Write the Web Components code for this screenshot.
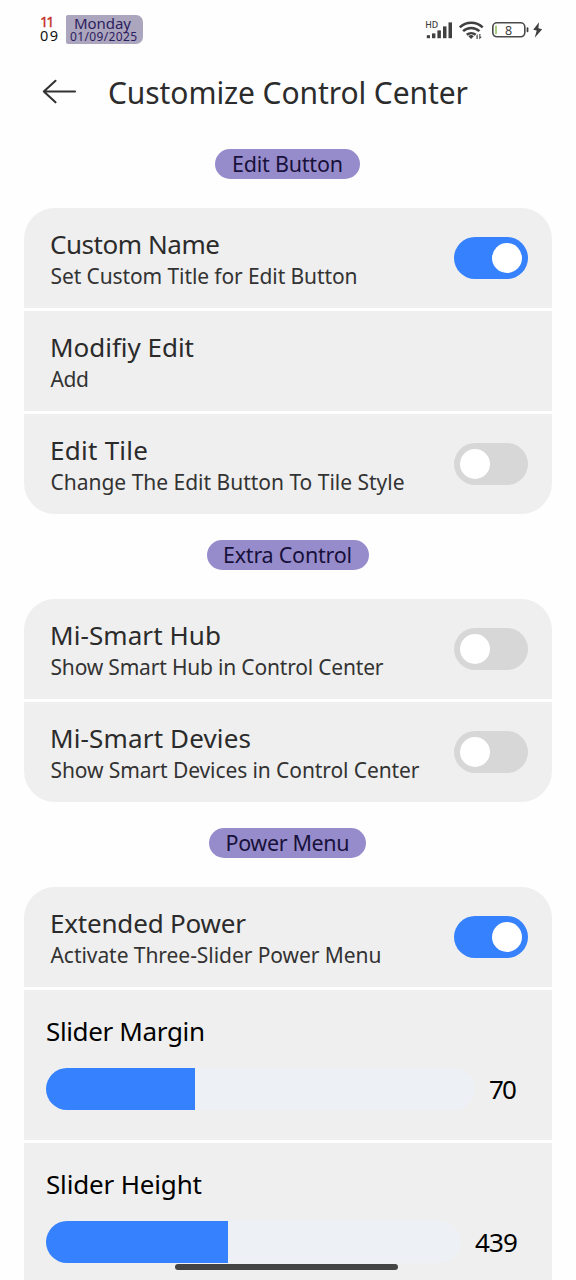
<!DOCTYPE html>
<html lang="en">
<head>
<meta charset="utf-8">
<title>Customize Control Center</title>
<style>
html, body { margin: 0; background: #fefefe; }
body { height: 1280px; overflow: hidden; font-family: "Noto Sans", "Open Sans", sans-serif; color: #2b2b2b; }
</style>
</head>
<body>
<settings-page></settings-page>
<script>
function define(name, html, setup) {
  const tpl = document.createElement('template');
  tpl.innerHTML = html;
  customElements.define(name, class extends HTMLElement {
    connectedCallback() {
      if (this.shadowRoot) return;
      this.attachShadow({ mode: 'open' }).append(tpl.content.cloneNode(true));
      if (setup) setup(this, this.shadowRoot);
    }
  });
}

/* A single line of text, tracked so that it fills the width given in "w". */
define('fit-text', `
<style>:host{display:block;white-space:nowrap} span{display:inline-block}</style><span></span>`,
(el, root) => {
  const span = root.querySelector('span');
  const text = el.getAttribute('text');
  span.textContent = text;
  const w = parseFloat(el.getAttribute('w'));
  if (w) {
    const natural = span.getBoundingClientRect().width;
    span.style.letterSpacing = ((w - natural) / (text.length - 1)) + 'px';
    el.style.width = w + 'px';
  }
});

define('status-bar', `
<style>
:host{display:flex;height:60px;box-sizing:border-box;padding:15px 0 0 40px;align-items:flex-start}
.time{width:26px;font-size:14.5px;line-height:14px;color:#111;margin-top:-1px}
.time .h{color:#c22820;-webkit-text-stroke:.3px #c22820}
.badge{width:76.5px;height:29px;border-radius:2px 7px 7px 2px;background:#aba5bd;color:#2b205f;box-sizing:border-box;padding-top:1px}
.day{font-size:15px;line-height:15px;margin-left:8px}
.date{font-size:12px;line-height:11px;margin-left:4px}
svg{margin-left:277.5px;width:130px;height:30px;display:block}
text{font-family:"Noto Sans",sans-serif}
</style>
<div class="time"><fit-text class="h" text="11" w="14.5"></fit-text><fit-text text="09" w="18"></fit-text></div>
<div class="badge"><fit-text class="day" text="Monday" w="57"></fit-text><fit-text class="date" text="01/09/2025" w="67"></fit-text></div>
<svg viewBox="420 15 130 30" fill="#404040">
  <text x="425.2" y="28" font-size="8.4" font-weight="500" textLength="13" lengthAdjust="spacingAndGlyphs">HD</text>
  <rect x="426.8" y="35.2" width="3.2" height="3"/><rect x="432" y="33.4" width="3.4" height="4.8"/><rect x="437.4" y="30.4" width="3.5" height="7.8"/><rect x="443" y="26.4" width="3.5" height="11.8"/><rect x="448.5" y="22.4" width="3.5" height="15.8"/>
  <g fill="none" stroke="#404040" stroke-width="2.5">
    <path d="M459.8 27.3a16.6 16.6 0 0 1 22.9 0"/>
    <path d="M463.1 31.2a11.8 11.8 0 0 1 16.3 0"/>
    <path d="M466.8 34.8a6.8 6.8 0 0 1 8.9 0"/>
  </g>
  <path d="M468.4 36.2a4.2 4.2 0 0 1 5.4 0l-2.7 2.8z"/>
  <path d="M476 36.2l1.7-2.2v5h-1.2v-2.8zM479.3 34h1.1v2.8h1.4l-2.5 2.6z"/>
  <rect x="492.8" y="22.8" width="32" height="14" rx="4.2" fill="#fff" stroke="#4a4a4a" stroke-width="1.6"/>
  <rect x="495.3" y="25.4" width="1.4" height="8.6" rx=".6" fill="#86b94c"/>
  <rect x="526.6" y="27.2" width="1.8" height="5" rx=".8"/>
  <text x="508.5" y="34.5" font-size="12.5" text-anchor="middle">8</text>
  <path d="M539 22.2l-5.8 7.6 3.5.8-2 7.2 7.5-8.6-3.8-.9z"/>
</svg>`);

define('title-bar', `
<style>
:host{display:flex;height:64px;align-items:center;padding-left:42px;color:#2c2c2c}
svg{width:35px;height:26px;margin-right:31px;display:block}
fit-text{font-size:30px;line-height:44px;padding-top:2px}
</style>
<svg viewBox="0 0 35 26" fill="none" stroke="#333" stroke-width="2.1" stroke-linecap="round" stroke-linejoin="round"><path d="M33 12.5H1.8M13.5 1.8L1.8 12.5l11.7 10.8"/></svg>
<fit-text text="Customize Control Center" w="360"></fit-text>`);

define('section-pill', `
<style>
:host{display:flex;justify-content:center;height:30px;margin-bottom:29px;padding-right:1px}
div{box-sizing:border-box;height:30px;border-radius:15px;background:#978ccb;color:#17113b;display:flex;justify-content:center}
fit-text{font-size:21.5px;line-height:30px}
</style>
<div><fit-text></fit-text></div>`, (el, root) => {
  root.querySelector('div').style.width = el.getAttribute('pill') + 'px';
  const old = root.querySelector('fit-text'), t = document.createElement('fit-text');
  t.setAttribute('text', el.getAttribute('text'));
  t.setAttribute('w', el.getAttribute('w'));
  old.replaceWith(t);
});

define('setting-card', `
<style>:host{display:flex;flex-direction:column;gap:3px;margin:0 24px 26px;border-radius:31px;overflow:hidden}
:host([continues]){border-radius:31px 31px 0 0}</style><slot></slot>`);

define('toggle-switch', `
<style>
:host{display:flex;box-sizing:border-box;width:74px;height:42px;border-radius:21px;padding:6px;background:#d7d7d7}
:host([on]){background:#3581fe;justify-content:flex-end}
i{width:30px;height:30px;border-radius:50%;background:#fff}
</style><i></i>`);

define('setting-row', `
<style>
:host{display:flex;box-sizing:border-box;height:100px;background:#efefef;align-items:center;justify-content:space-between;padding:0 24px 0 26px}
.t{font-size:26px;line-height:32px;margin-top:3px}
.s{font-size:21px;line-height:32px;color:#333;margin-left:.5px}
</style>
<div class="text"></div><slot></slot>`, (el, root) => {
  const box = root.querySelector('.text');
  for (const [cls, txt, w] of [['t', 'name', 'tw'], ['s', 'sub', 'sw']]) {
    const t = document.createElement('fit-text');
    t.className = cls;
    t.setAttribute('text', el.getAttribute(txt));
    t.setAttribute('w', el.getAttribute(w));
    box.append(t);
  }
});

define('slider-row', `
<style>
:host{display:block;box-sizing:border-box;height:150px;background:#efefef;padding:25px 0 0 22px;color:#000}
.n{font-size:26px;line-height:32px;margin-bottom:21px}
.line{display:flex;align-items:center;gap:14px}
.track{height:42px;border-radius:21px;background:linear-gradient(#edf1f5,#edf0f5);overflow:hidden}
.fill{height:42px;background:#3581fe}
.v{font-size:26px;line-height:42px}
</style>
<div class="head"></div>
<div class="line"><div class="track"><div class="fill"></div></div></div>`, (el, root) => {
  const text = (cls, txt, w) => {
    const t = document.createElement('fit-text');
    t.className = cls;
    t.setAttribute('text', txt);
    t.setAttribute('w', w);
    return t;
  };
  root.querySelector('.head').append(text('n', el.getAttribute('name'), el.getAttribute('tw')));
  root.querySelector('.line').append(text('v', el.getAttribute('value'), el.getAttribute('vw')));
  root.querySelector('.track').style.width = el.getAttribute('track') + 'px';
  root.querySelector('.fill').style.width = el.getAttribute('fill') + 'px';
});

define('home-indicator', `
<style>:host{position:fixed;left:175px;bottom:10px;width:223px;height:6px;border-radius:3px;background:#444}</style>`);

define('settings-page', `
<style>:host{display:block;width:576px}</style>
<status-bar></status-bar>
<title-bar style="margin-bottom:25px"></title-bar>
<section-pill text="Edit Button" w="111" pill="145"></section-pill>
<setting-card>
  <setting-row name="Custom Name" tw="170" sub="Set Custom Title for Edit Button" sw="307"><toggle-switch on></toggle-switch></setting-row>
  <setting-row name="Modifiy Edit" tw="144" sub="Add" sw="38.5"></setting-row>
  <setting-row name="Edit Tile" tw="98" sub="Change The Edit Button To Tile Style" sw="354"><toggle-switch></toggle-switch></setting-row>
</setting-card>
<section-pill text="Extra Control" w="129" pill="162"></section-pill>
<setting-card>
  <setting-row name="Mi-Smart Hub" tw="171" sub="Show Smart Hub in Control Center" sw="333"><toggle-switch></toggle-switch></setting-row>
  <setting-row name="Mi-Smart Devies" tw="201" sub="Show Smart Devices in Control Center" sw="369"><toggle-switch></toggle-switch></setting-row>
</setting-card>
<section-pill text="Power Menu" w="124" pill="157"></section-pill>
<setting-card continues>
  <setting-row name="Extended Power" tw="196" sub="Activate Three-Slider Power Menu" sw="331"><toggle-switch on></toggle-switch></setting-row>
  <slider-row name="Slider Margin" tw="159" track="429" fill="149" value="70" vw="28"></slider-row>
  <slider-row name="Slider Height" tw="156" track="415" fill="182" value="439" vw="43"></slider-row>
</setting-card>
<home-indicator></home-indicator>`);
</script>
</body>
</html>
